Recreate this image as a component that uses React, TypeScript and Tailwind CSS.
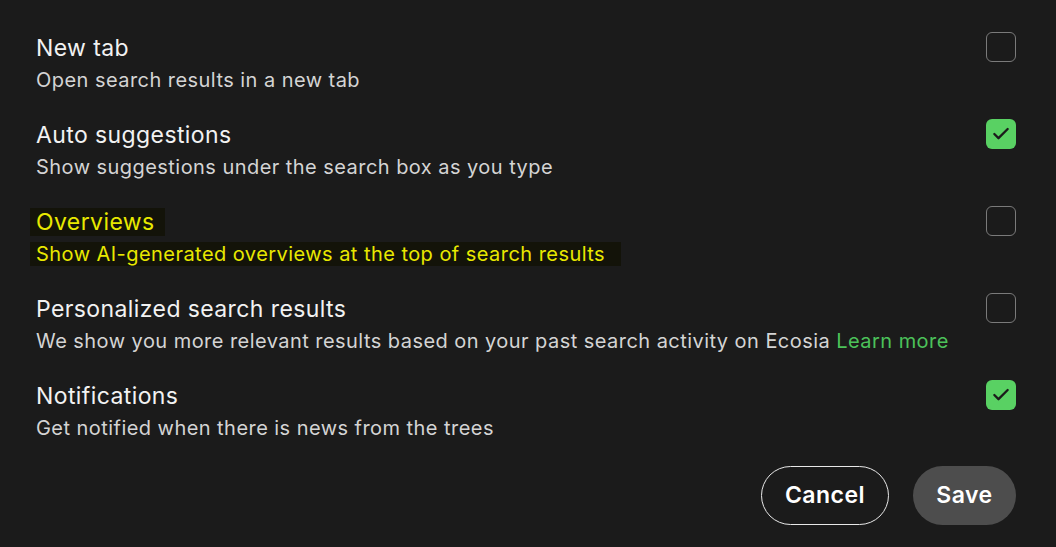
import { Check } from "lucide-react";

type Setting = {
  title: string;
  desc: string;
  checked: boolean;
  highlight?: boolean;
  link?: string;
};

const settings: Setting[] = [
  { title: "New tab", desc: "Open search results in a new tab", checked: false },
  { title: "Auto suggestions", desc: "Show suggestions under the search box as you type", checked: true },
  { title: "Overviews", desc: "Show AI-generated overviews at the top of search results", checked: false, highlight: true },
  {
    title: "Personalized search results",
    desc: "We show you more relevant results based on your past search activity on Ecosia",
    checked: false,
    link: "Learn more",
  },
  { title: "Notifications", desc: "Get notified when there is news from the trees", checked: true },
];

function Checkbox({ checked }: { checked: boolean }) {
  if (checked) {
    return (
      <div className="w-[30px] h-[30px] rounded-[6px] bg-[#59d163] flex items-center justify-center shrink-0">
        <Check className="w-5 h-5 text-[#1b1b1b]" strokeWidth={2.75} />
      </div>
    );
  }
  return <div className="w-[30px] h-[30px] rounded-[6px] border border-[#7a7a7a] shrink-0" />;
}

export default function App() {
  return (
    <div
      className="w-[1056px] h-[547px] bg-[#1b1b1b] pl-9 pr-10 pt-8"
      style={{ fontFamily: "Inter, 'Noto Sans', sans-serif" }}
    >
      <div className="flex flex-col gap-[25px]">
        {settings.map((s) => (
          <div key={s.title} className="flex items-start justify-between">
            <div className="flex flex-col gap-0.5">
              <div className="text-[23px] leading-8 tracking-[0.4px]">
                {s.highlight ? (
                  <span className="bg-[#131309] text-[#e8e800] -ml-1.5 pl-1.5 pr-2.5">{s.title}</span>
                ) : (
                  <span className="text-[#f2f2f2]">{s.title}</span>
                )}
              </div>
              <div className="text-[20px] leading-7 tracking-[0.45px]">
                {s.highlight ? (
                  <span className="bg-[#131309] text-[#e8e800] -ml-1.5 pl-1.5 pr-4">{s.desc}</span>
                ) : (
                  <span className="text-[#d4d4d4]">
                    {s.desc}
                    {s.link && <span className="text-[#4cc25a]"> {s.link}</span>}
                  </span>
                )}
              </div>
            </div>
            <div>
              <Checkbox checked={s.checked} />
            </div>
          </div>
        ))}
      </div>
      <div className="flex justify-end gap-6 mt-[24px]">
        <button className="w-32 h-[59px] rounded-full border border-[#e8e8e8] text-white text-[23px] tracking-[0.5px] font-semibold">
          Cancel
        </button>
        <button className="w-[103px] h-[59px] rounded-full bg-[#4d4d4d] text-white text-[23px] tracking-[0.5px] font-semibold">
          Save
        </button>
      </div>
    </div>
  );
}
